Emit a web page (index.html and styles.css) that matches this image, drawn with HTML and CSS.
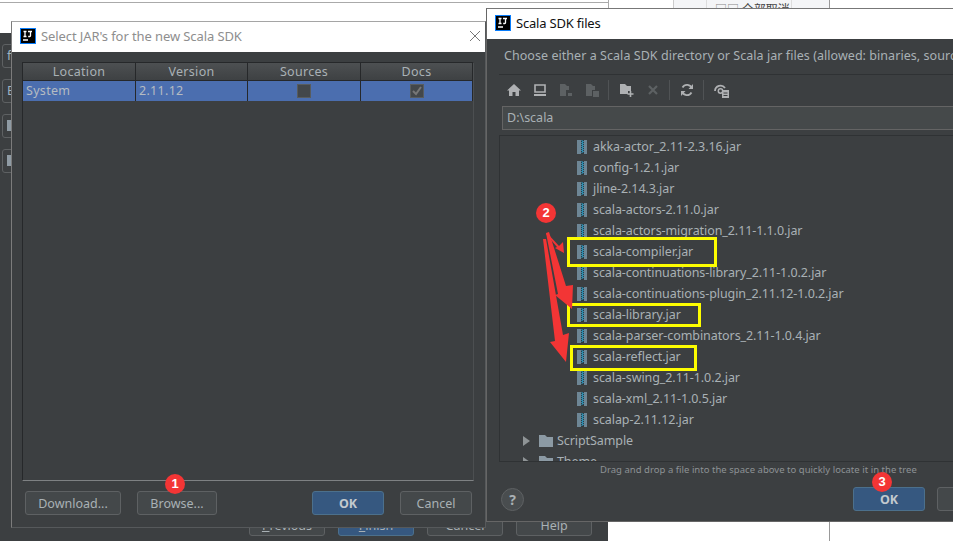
FILE: index.html
```html
<!DOCTYPE html>
<html>
<head>
    <title>Scala SDK files</title>
    <link rel="stylesheet" href="styles.css">
</head>
<body>
    <svg width="0" height="0" class="defs">
        <defs>
            <symbol id="ij" viewBox="0 0 16 16">
                <rect x="0.5" y="0.5" width="15" height="15" fill="#000" stroke="#087cfa"/>
                <path d="M3.500 3.500h3M5 3.500v5M3.500 8.500h3M8 3.500h4M10.500 3.500v4.200q0 .8-.8.8H8.200M3 12h5" stroke="#fff" stroke-width="1.300" fill="none"/>
            </symbol>
            <symbol id="jar" viewBox="0 0 10 14">
                <rect width="10" height="14" fill="#6e8695"/>
                <rect x="4" width="3" height="14" fill="#2f3a40"/>
                <path d="M4.500 0.500l2 1-2 1 2 1-2 1 2 1-2 1 2 1-2 1 2 1-2 1 2 1-2 1" stroke="#2fa8d5" fill="none"/>
            </symbol>
            <symbol id="folder" viewBox="0 0 14 12">
                <path d="M0 0h6l2 2h6v10H0z" fill="#8c9aa4"/>
            </symbol>
        </defs>
    </svg>

    <!-- stuff behind the dialogs -->
    <div class="top-line"></div>
    <div class="page-panel">
        <div class="page-tab"><span class="page-boxes">□□</span> 全部取消</div>
    </div>
    <div class="page-line"></div>

    <div class="wizard">
        <div class="side-btn">f</div>
        <div class="side-btn">E</div>
        <div class="side-btn"><i></i></div>
        <div class="side-btn"><i></i></div>
        <div class="wizard-buttons">
            <div class="btn btn-wiz"><u>P</u>revious</div>
            <div class="btn btn-wiz btn-blue"><u>F</u>inish</div>
            <div class="btn btn-wiz">Cancel</div>
            <div class="btn btn-wiz">Help</div>
        </div>
    </div>

    <!-- left dialog -->
    <div class="dialog dialog-left">
        <div class="titlebar">
            <svg class="ij"><use href="#ij"/></svg>
            <span class="title-muted">Select JAR's for the new Scala SDK</span>
            <svg class="close" width="12" height="12" viewBox="0 0 12 12"><path d="M1 1l10 10M11 1L1 11" stroke="#777" fill="none"/></svg>
        </div>
        <div class="dialog-body">
            <div class="table">
                <div class="thead">
                    <div>Location</div>
                    <div>Version</div>
                    <div>Sources</div>
                    <div>Docs</div>
                </div>
                <div class="trow">
                    <div class="cell-left">System</div>
                    <div class="cell-left">2.11.12</div>
                    <div><span class="check"></span></div>
                    <div><span class="check">
                        <svg width="12" height="12" viewBox="0 0 12 12"><path d="M2 6l3 3 5-7" stroke="#777" stroke-width="2" fill="none"/></svg>
                    </span></div>
                </div>
            </div>
            <div class="left-buttons">
                <div class="btn btn-download">Download...</div>
                <div class="btn btn-browse">Browse...</div>
                <div class="spacer"></div>
                <div class="btn btn-ok">OK</div>
                <div class="btn btn-cancel">Cancel</div>
            </div>
        </div>
    </div>

    <!-- right dialog -->
    <div class="dialog dialog-right">
        <div class="titlebar titlebar-right">
            <svg class="ij"><use href="#ij"/></svg>
            <span>Scala SDK files</span>
        </div>
        <div class="dialog-body body-right">
            <div class="choose">Choose either a Scala SDK directory or Scala jar files (allowed: binaries, sources, docs)</div>
            <div class="toolbar">
                <svg width="14" height="14" viewBox="0 0 14 14"><path d="M7 1L0 7.500h2V13h3.500V9h3v4H12V7.500h2z" fill="#afb1b3"/></svg>
                <svg width="14" height="14" viewBox="0 0 14 14"><path d="M2 2h10v7H2z" fill="none" stroke="#afb1b3" stroke-width="1.600"/><path d="M1 11h12v2H1z" fill="#afb1b3"/></svg>
                <svg width="14" height="14" viewBox="0 0 14 14"><path d="M1 1h5l2 2h2v4H7v6H1z" fill="#5d6163"/><path d="M9 10h4v3H9z" fill="#5d6163"/></svg>
                <svg width="14" height="14" viewBox="0 0 14 14"><path d="M1 1h5l2 2h2v4H7v6H1z" fill="#5d6163"/><path d="M8 8h6v6H8z" fill="#5d6163"/></svg>
                <span class="tool-sep"></span>
                <svg width="15" height="14" viewBox="0 0 15 14"><path d="M1 1h5l2 2h4v5H9v3H1z" fill="#afb1b3"/><path d="M11.500 8v6M8.500 11h6" stroke="#afb1b3" stroke-width="1.600"/></svg>
                <svg width="14" height="14" viewBox="0 0 14 14"><path d="M3 3l8 8M11 3l-8 8" stroke="#5d6163" stroke-width="2.200"/></svg>
                <span class="tool-sep"></span>
                <svg width="14" height="14" viewBox="0 0 14 14"><path d="M12 5.500A5.200 5.200 0 0 0 2.500 4.500M2 8.500a5.200 5.200 0 0 0 9.500 1" fill="none" stroke="#afb1b3" stroke-width="1.800"/><path d="M13 1v5H8.500zM1 13V8h4.500z" fill="#afb1b3"/></svg>
                <span class="tool-sep"></span>
                <svg width="16" height="15" viewBox="0 0 16 15"><path d="M1 8a5.500 5.500 0 0 1 10-3" fill="none" stroke="#afb1b3" stroke-width="1.800"/><circle cx="6.500" cy="8" r="2.200" fill="none" stroke="#afb1b3" stroke-width="1.500"/><path d="M8 7h7v8H8z" fill="#afb1b3"/><path d="M9.500 10h4M9.500 12.500h4" stroke="#3c3f41"/></svg>
            </div>
            <div class="path-field">D:\scala</div>
            <div class="tree">
                <div class="tree-row"><svg class="jar"><use href="#jar"/></svg>akka-actor_2.11-2.3.16.jar</div>
                <div class="tree-row"><svg class="jar"><use href="#jar"/></svg>config-1.2.1.jar</div>
                <div class="tree-row"><svg class="jar"><use href="#jar"/></svg>jline-2.14.3.jar</div>
                <div class="tree-row"><svg class="jar"><use href="#jar"/></svg>scala-actors-2.11.0.jar</div>
                <div class="tree-row"><svg class="jar"><use href="#jar"/></svg>scala-actors-migration_2.11-1.1.0.jar</div>
                <div class="tree-row"><svg class="jar"><use href="#jar"/></svg>scala-compiler.jar</div>
                <div class="tree-row"><svg class="jar"><use href="#jar"/></svg>scala-continuations-library_2.11-1.0.2.jar</div>
                <div class="tree-row"><svg class="jar"><use href="#jar"/></svg>scala-continuations-plugin_2.11.12-1.0.2.jar</div>
                <div class="tree-row"><svg class="jar"><use href="#jar"/></svg>scala-library.jar</div>
                <div class="tree-row"><svg class="jar"><use href="#jar"/></svg>scala-parser-combinators_2.11-1.0.4.jar</div>
                <div class="tree-row"><svg class="jar"><use href="#jar"/></svg>scala-reflect.jar</div>
                <div class="tree-row"><svg class="jar"><use href="#jar"/></svg>scala-swing_2.11-1.0.2.jar</div>
                <div class="tree-row"><svg class="jar"><use href="#jar"/></svg>scala-xml_2.11-1.0.5.jar</div>
                <div class="tree-row"><svg class="jar"><use href="#jar"/></svg>scalap-2.11.12.jar</div>
                <div class="tree-row tree-dir"><span class="arrow"></span><svg class="folder"><use href="#folder"/></svg>ScriptSample</div>
                <div class="tree-row tree-dir"><span class="arrow"></span><svg class="folder"><use href="#folder"/></svg>Theme</div>
            </div>
            <div class="hint">Drag and drop a file into the space above to quickly locate it in the tree</div>
            <div class="right-buttons">
                <div class="help-btn">?</div>
                <div class="spacer"></div>
                <div class="btn btn-ok">OK</div>
                <div class="btn btn-next">Cancel</div>
            </div>
        </div>
    </div>

    <!-- red and yellow marks drawn on top of the screenshot -->
    <div class="mark mark-1"></div>
    <div class="mark mark-2"></div>
    <div class="mark mark-3"></div>
    <svg class="arrows" width="953" height="541" viewBox="0 0 953 541">
        <path d="M547 233L559 246 563 242 564 253 555 248 557 247 546 234z" fill="#f33535"/>
        <path d="M546 233L549 232 566 286 573 285 572 309 555 295 558 294z" fill="#f33535"/>
        <path d="M543 239L546 239 563 335 569 333 566 362 550 342 555 341z" fill="#f33535"/>
    </svg>
    <div class="badge badge-1">1</div>
    <div class="badge badge-2">2</div>
    <div class="badge badge-3">3</div>
</body>
</html>
```

FILE: styles.css
```css
* {
    box-sizing: border-box;
}
html, body {
    margin: 0;
    height: 541px;
    overflow: hidden;
}
body {
    position: relative;
    width: 953px;
    background: #fff;
    font-family: "Noto Sans", Arial, sans-serif;
    font-size: 12.5px;
    color: #a9b1b5;
}
.defs {
    position: absolute;
}
.spacer {
    flex: 1;
}

/* behind the dialogs */
.top-line {
    position: absolute;
    left: 0;
    top: 0;
    width: 609px;
    height: 22px;
    border-right: 1px solid #aaa;
    background: linear-gradient(#fff 2px, #aaa 2px, #aaa 3px, #fff 3px);
}
.page-panel {
    position: absolute;
    left: 673px;
    top: 0;
    width: 157px;
    height: 10px;
    padding-left: 32px;
    background: #f4f5f7;
    border-left: 1px solid #ccc;
    border-right: 1px solid #999;
    overflow: hidden;
}
.page-tab {
    width: 86px;
    height: 10px;
    padding-left: 8px;
    border-left: 1px solid #ddd;
    border-right: 1px solid #ddd;
    font-family: "Noto Sans CJK SC", sans-serif;
    font-size: 12px;
    line-height: 17px;
    color: #444;
    white-space: nowrap;
}
.page-boxes {
    color: #888;
}
.page-line {
    position: absolute;
    left: 829px;
    top: 520px;
    width: 1px;
    height: 21px;
    background: #999;
}
.wizard {
    position: absolute;
    left: 0;
    top: 33px;
    width: 608px;
    height: 508px;
    background: #3c3f41;
    padding: 11px 0 0 2px;
}
.side-btn {
    width: 30px;
    height: 24px;
    margin-bottom: 11px;
    padding-left: 4px;
    border: 1px solid #5e6163;
    border-radius: 3px;
    line-height: 22px;
    color: #9fb4c4;
}
.side-btn i {
    display: block;
    width: 4px;
    height: 11px;
    margin-top: 5px;
    background: #8f9ba4;
}
.wizard-buttons {
    position: absolute;
    left: 249px;
    top: 481px;
    display: flex;
    gap: 13px;
}

/* windows */
.dialog {
    position: absolute;
    display: flex;
    flex-direction: column;
    border: 1px solid #9a9a9a;
    background: #3c3f41;
}
.dialog-left {
    left: 11px;
    top: 21px;
    width: 475px;
    height: 507px;
    border-color: #a5a5a5 #56595b #56595b #7c7c7c;
}
.dialog-right {
    left: 486px;
    top: 8px;
    width: 550px;
    height: 514px;
    border-color: #777 #555 #666 #666;
}
.titlebar {
    flex: none;
    display: flex;
    align-items: center;
    height: 30px;
    padding: 0 0 2px 8px;
    background: #fff;
    color: #111;
    font-size: 13px;
    letter-spacing: -0.2px;
}
.title-muted {
    color: #8e8e8e;
    letter-spacing: -0.1px;
}
.ij {
    width: 16px;
    height: 16px;
    margin-right: 5px;
}
.close {
    margin-left: auto;
    margin-right: 4px;
}
.dialog-body {
    flex: 1;
    display: flex;
    flex-direction: column;
    min-height: 0;
    padding: 10px 11px 0 10px;
}

/* table */
.table {
    height: 419px;
    border: 1px solid #26282a;
    border-right-color: #4c4f51;
    border-bottom-color: #7e8183;
}
.thead, .trow {
    display: grid;
    grid-template-columns: 113px 112px 113px 1fr;
}
.thead {
    height: 17px;
    background: linear-gradient(#4d5052, #3e4143);
    line-height: 17px;
    text-align: center;
    letter-spacing: 0.3px;
}
.thead div {
    border-right: 1px solid #26282a;
}
.trow {
    height: 21px;
    border-top: 1px solid #26282a;
    background: #4b6eaf;
    color: #b5bcc2;
    line-height: 20px;
    text-align: center;
    letter-spacing: 0.3px;
}
.trow > div {
    border-right: 1px solid #26282a;
}
.cell-left {
    padding-left: 3px;
    text-align: left;
}
.check {
    display: inline-block;
    width: 14px;
    height: 14px;
    margin-top: 3px;
    background: #43474a;
    border: 1px solid #585c5e;
    vertical-align: top;
}
.check svg {
    display: block;
}

/* buttons */
.btn {
    height: 24px;
    border: 1px solid #5e6163;
    border-radius: 3px;
    background: #44484a;
    color: #a9b1b5;
    line-height: 23px;
    text-align: center;
}
.btn-wiz {
    width: 76px;
    height: 22px;
    line-height: 21px;
}
.btn-blue {
    background: #365880;
    border-color: #4c708c;
}
.left-buttons {
    display: flex;
    margin-top: 10px;
    padding: 0 2px 0 3px;
}
.btn-download {
    width: 96px;
}
.btn-browse {
    width: 80px;
    margin-left: 16px;
}
.btn-ok {
    width: 72px;
    background: #365880;
    border-color: #4c708c;
    color: #c2c9ce;
    font-weight: 700;
}
.btn-cancel {
    width: 72px;
    margin-left: 16px;
}

/* file chooser */
.body-right {
    padding: 0 0 0 12px;
}
.choose {
    height: 35px;
    padding: 7px 0 0 5px;
    line-height: 20px;
    white-space: nowrap;
    letter-spacing: 0.05px;
}
.toolbar {
    display: flex;
    align-items: center;
    height: 31px;
    margin-bottom: 1px;
    padding-left: 8px;
    gap: 12px;
    border-top: 1px solid #2f3234;
}
.tool-sep {
    width: 1px;
    height: 20px;
    margin: 0 -2px 0 -3px;
    background: #505355;
}
.path-field {
    height: 24px;
    margin-left: 3px;
    padding-left: 4px;
    border: 1px solid #646464;
    background: #45494a;
    line-height: 22px;
}
.tree {
    height: 327px;
    margin-top: 5px;
    border: 1px solid #2f3234;
    overflow: hidden;
}
.tree-row {
    display: flex;
    align-items: center;
    height: 21px;
    padding-left: 77px;
    white-space: nowrap;
    letter-spacing: -0.08px;
}
.tree-dir {
    padding-left: 23px;
}
.jar {
    width: 10px;
    height: 14px;
    margin-right: 6px;
}
.folder {
    width: 14px;
    height: 12px;
    margin-right: 4px;
}
.arrow {
    width: 0;
    height: 0;
    margin-right: 9px;
    border-left: 7px solid #8f9496;
    border-top: 5px solid transparent;
    border-bottom: 5px solid transparent;
}
.hint {
    height: 18px;
    padding-left: 101px;
    font-size: 9.5px;
    line-height: 16px;
    white-space: nowrap;
    letter-spacing: 0.03px;
    color: #8d9295;
}
.right-buttons {
    display: flex;
    align-items: center;
    height: 24px;
    margin-top: 7px;
    padding-right: 26px;
}
.help-btn {
    width: 23px;
    height: 23px;
    margin-left: 2px;
    border: 1px solid #5e6163;
    border-radius: 50%;
    background: #494d4f;
    color: #a9b1b5;
    font-weight: 700;
    font-size: 14px;
    line-height: 21px;
    text-align: center;
}
.right-buttons .btn-next {
    width: 72px;
    margin-left: 12px;
}

/* annotations */
.mark {
    position: absolute;
    border: 3px solid #fdfd00;
}
.mark-1 {
    left: 567px;
    top: 237px;
    width: 150px;
    height: 30px;
}
.mark-2 {
    left: 567px;
    top: 303px;
    width: 134px;
    height: 24px;
}
.mark-3 {
    left: 570px;
    top: 345px;
    width: 127px;
    height: 26px;
}
.arrows {
    position: absolute;
    left: 0;
    top: 0;
}
.badge {
    position: absolute;
    width: 20px;
    height: 20px;
    border-radius: 50%;
    background: #f33535;
    color: #fff;
    font-family: "Liberation Sans", Arial, sans-serif;
    font-size: 13px;
    font-weight: 700;
    line-height: 20px;
    text-align: center;
}
.badge-1 {
    left: 165px;
    top: 474px;
}
.badge-2 {
    left: 536px;
    top: 203px;
}
.badge-3 {
    left: 872px;
    top: 472px;
}
```
